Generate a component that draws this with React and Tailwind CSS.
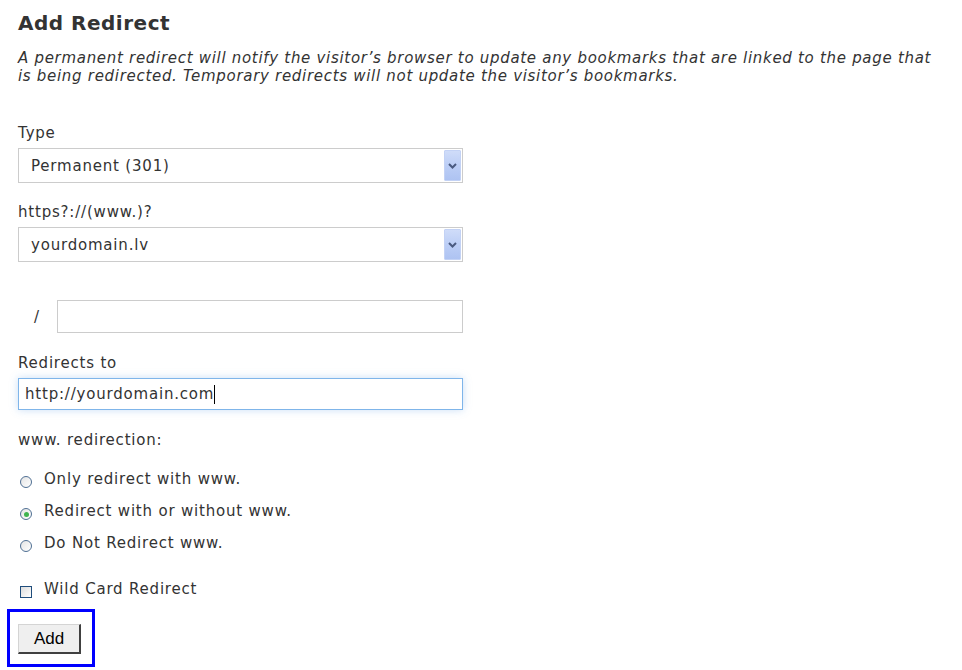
import React from 'react';

const font = { fontFamily: '"DejaVu Sans", Verdana, sans-serif' };

function Chevron() {
  return (
    <svg width="9" height="6" viewBox="0 0 9 6">
      <path d="M1 1 L4.5 4.5 L8 1" fill="none" stroke="#4a5a80" strokeWidth="2" />
    </svg>
  );
}

function FakeSelect({ value }) {
  return (
    <div className="w-[445px] h-[35px] border border-[#cccccc] bg-white flex items-stretch">
      <div className="flex-1 flex items-center pl-[12px] text-[15px] leading-[18px] tracking-[0.8px] text-[#333]">{value}</div>
      <div className="w-[17px] my-[1px] mr-[1px] flex items-center justify-center bg-gradient-to-b from-[#cfdcf9] via-[#bccef6] to-[#aec3f2] border border-[#c3d2f5] rounded-[1px]">
        <Chevron />
      </div>
    </div>
  );
}

function Radio({ checked, label }) {
  return (
    <div className="flex items-start h-[18px]">
      <div className="ml-[2px] mt-[6px] w-[12px] h-[12px] rounded-full border border-[#4f6f93] bg-gradient-to-br from-[#e4e4e4] to-white flex items-center justify-center">
        {checked && <div className="w-[5px] h-[5px] rounded-full bg-[#3fb34f]" />}
      </div>
      <span className="ml-[12px] text-[15px] leading-[18px] tracking-[0.8px] text-[#333]">{label}</span>
    </div>
  );
}

export default function App() {
  return (
    <div className="bg-white min-h-[670px] w-[962px] pl-[18px] text-[#333]" style={font}>
      <h1 className="pt-[11px] text-[20px] leading-[24px] font-bold tracking-[0.5px] text-[#333]">Add Redirect</h1>
      <p className="mt-[14px] w-[925px] italic text-[15px] leading-[18px] tracking-[0.7px] text-[#333]">
        A permanent redirect will notify the visitor’s browser to update any bookmarks that are linked to the page that is being redirected. Temporary redirects will not update the visitor’s bookmarks.
      </p>

      <div className="mt-[39px] text-[15px] leading-[18px] tracking-[0.8px]">Type</div>
      <div className="mt-[6px]">
        <FakeSelect value="Permanent (301)" />
      </div>

      <div className="mt-[20px] text-[15px] leading-[18px] tracking-[0.8px]">https?://(www.)?</div>
      <div className="mt-[6px]">
        <FakeSelect value="yourdomain.lv" />
      </div>

      <div className="mt-[38px] flex items-center">
        <span className="w-[39px] pl-[16px] text-[15px] leading-[18px]">/</span>
        <input className="w-[406px] h-[33px] border border-[#cccccc] bg-white outline-none" />
      </div>

      <div className="mt-[21px] text-[15px] leading-[18px] tracking-[0.8px]">Redirects to</div>
      <div className="mt-[6px]">
        <div className="w-[445px] h-[32px] border border-[#7fb5ea] bg-white shadow-[0_0_8px_rgba(100,160,230,0.35)] flex items-center pl-[6px] text-[15px] leading-[18px] tracking-[0.8px]">
          http://yourdomain.com<span className="inline-block w-[1px] h-[19px] bg-black" />
        </div>
      </div>

      <div className="mt-[21px] text-[15px] leading-[18px] tracking-[0.8px]">www. redirection:</div>
      <div className="mt-[21px] flex flex-col gap-[14px]">
        <Radio label="Only redirect with www." />
        <Radio checked label="Redirect with or without www." />
        <Radio label="Do Not Redirect www." />
      </div>

      <div className="mt-[28px] flex items-start h-[18px]">
        <div className="ml-[2px] mt-[6px] w-[12px] h-[12px] border border-[#1f4d7c] bg-gradient-to-br from-[#dcdcdc] to-white" />
        <span className="ml-[12px] text-[15px] leading-[18px] tracking-[0.8px]">Wild Card Redirect</span>
      </div>

      <div className="mt-[11px] -ml-[11px] w-[88px] border-[3px] border-[#0000ff] pl-[8px] pt-[12px] pb-[10px]">
        <button
          className="w-[63px] h-[30px] bg-[#efefef] border border-t-[#d4d4d4] border-l-[#d4d4d4] border-r-[#404040] border-b-[#404040] border-r-2 border-b-2 text-[17px] text-black"
          style={{ fontFamily: '"Liberation Sans", Arial, sans-serif' }}
        >
          Add
        </button>
      </div>
    </div>
  );
}
